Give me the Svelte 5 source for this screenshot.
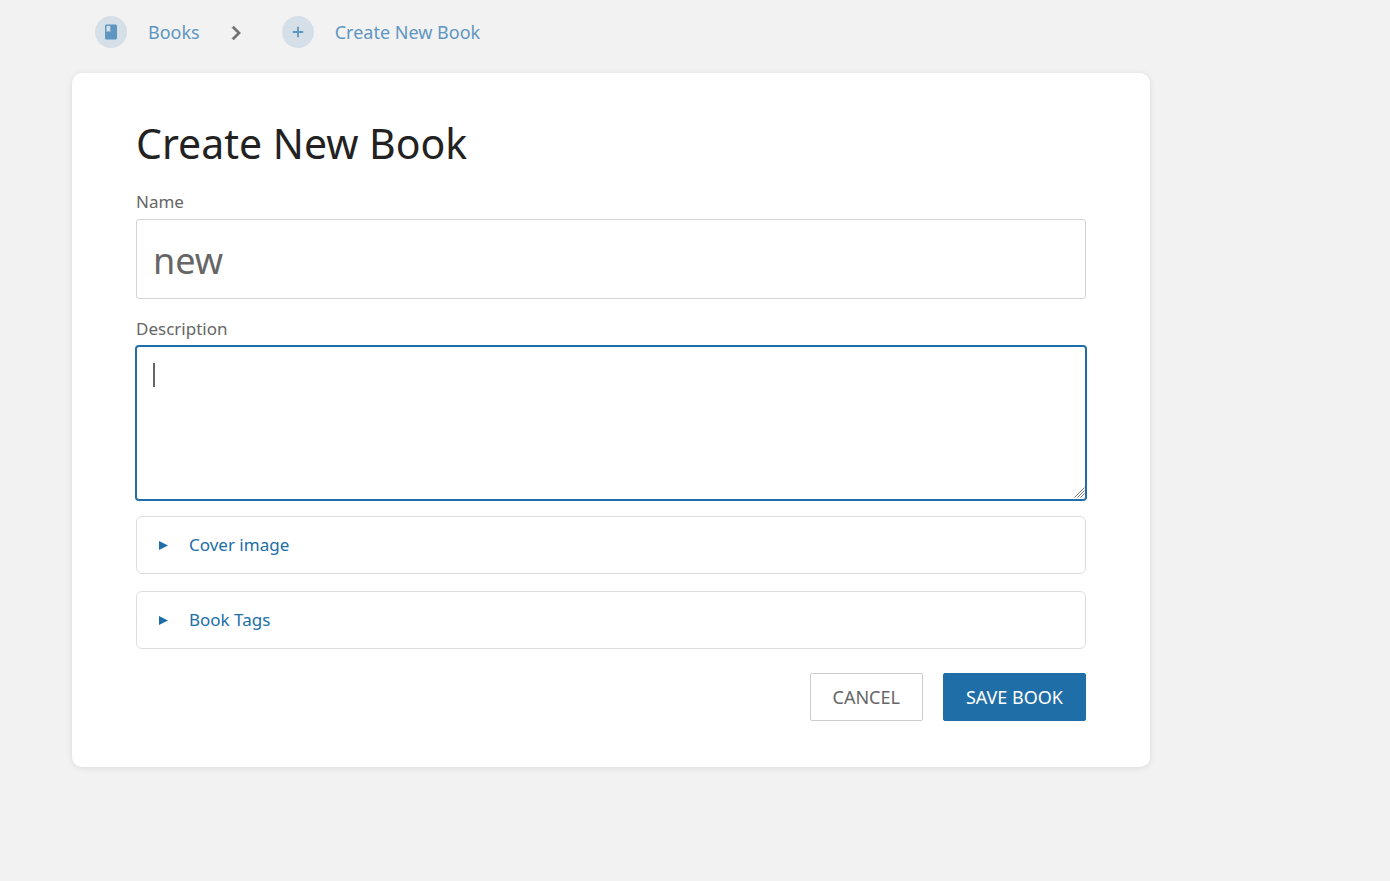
<script>
  let name = $state('new');
  let description = $state('');
  const sections = ['Cover image', 'Book Tags'];
</script>

<svelte:head><title>Create New Book</title></svelte:head>

<div class="page">
  <nav class="crumbs" aria-label="Breadcrumbs">
    <a class="crumb" href="#books">
      <span class="disc">
        <svg width="18" height="18" viewBox="0 0 24 24" aria-hidden="true">
          <path fill="currentColor" d="M18 2H6c-1.100 0-2 .9-2 2v16c0 1.100.9 2 2 2h12c1.100 0 2-.9 2-2V4c0-1.100-.9-2-2-2zM6 4h5v8l-2.500-1.500L6 12V4z" />
        </svg>
      </span>
      <span>Books</span>
    </a>
    <svg class="chevron" width="28" height="28" viewBox="0 0 24 24" aria-hidden="true">
      <path fill="currentColor" d="M10 6L8.590 7.410 13.170 12l-4.580 4.590L10 18l6-6z" stroke="currentColor" stroke-width="0.4" />
    </svg>
    <a class="crumb" href="#create">
      <span class="disc">
        <svg width="18" height="18" viewBox="0 0 24 24" aria-hidden="true">
          <path fill="currentColor" d="M19 13.200h-5.800V19h-2.400v-5.800H5v-2.400h5.800V5h2.400v5.800H19z" />
        </svg>
      </span>
      <span>Create New Book</span>
    </a>
  </nav>

  <main class="card">
    <h1>Create New Book</h1>
    <form onsubmit={(event) => event.preventDefault()}>
      <label for="name">Name</label>
      <input id="name" type="text" bind:value={name} />

      <label for="description">Description</label>
      <div class="area">
        <textarea id="description" bind:value={description}></textarea>
        {#if !description}<span class="caret"></span>{/if}
        <svg class="grip" width="11" height="11" viewBox="0 0 11 11" aria-hidden="true">
          <path d="M0.500 10.500L10.500 0.500M3.500 10.500L10.500 3.500M6.500 10.500L10.500 6.500" stroke="#777" stroke-width="1" />
        </svg>
      </div>

      {#each sections as section}
        <button class="section" type="button" aria-expanded="false">
          <svg width="9" height="9" viewBox="0 0 9 9" aria-hidden="true"><path fill="currentColor" d="M0 0L9 4.500L0 9z" /></svg>
          <span>{section}</span>
        </button>
      {/each}

      <div class="actions">
        <a class="button outline" href="#books">CANCEL</a>
        <button class="button" type="submit">SAVE BOOK</button>
      </div>
    </form>
  </main>
</div>

<style>
  :global(body) {
    margin: 0;
    background: #f2f2f2;
  }
  .page, .page * {
    box-sizing: border-box;
  }
  .page {
    padding: 0 240px 48px 72px;
    font-family: "Noto Sans", "Open Sans", sans-serif;
    font-size: 17px;
    line-height: 24px;
    color: #666;
  }
  .crumbs {
    display: flex;
    align-items: center;
    gap: 22px;
    padding: 16px 23px 25px;
    font-size: 18px;
  }
  .crumb {
    display: flex;
    align-items: center;
    gap: 21px;
    color: #5f96c1;
    text-decoration: none;
  }
  .disc {
    display: grid;
    place-items: center;
    width: 32px;
    height: 32px;
    border-radius: 50%;
    background: #d5dfe7;
  }
  .chevron {
    margin: 2px 10px 0 0;
    color: #707070;
  }
  .card {
    padding: 40px 64px 46px;
    background: #fff;
    border-radius: 10px;
    box-shadow: 0 1px 6px rgba(0, 0, 0, 0.1);
  }
  h1 {
    margin: 0 0 17px;
    font-size: 41px;
    line-height: 60px;
    font-weight: 400;
    color: #222;
  }
  form {
    display: flex;
    flex-direction: column;
  }
  label {
    margin-bottom: 5px;
  }
  input, textarea {
    width: 100%;
    display: block;
    font-family: inherit;
    color: #666;
    background: #fff;
    border: 1px solid #d4d4d4;
    border-radius: 3px;
    outline: none;
  }
  input {
    height: 80px;
    margin-bottom: 18px;
    padding: 2px 16px 0;
    font-size: 36px;
  }
  .area {
    position: relative;
    margin-bottom: 16px;
  }
  textarea {
    height: 154px;
    padding: 16px;
    font-size: 17px;
    border-color: #206ea7;
    box-shadow: 0 0 0 1px #206ea7;
    resize: vertical;
  }
  textarea::-webkit-resizer {
    background: transparent;
  }
  .caret {
    position: absolute;
    left: 17px;
    top: 17px;
    width: 2px;
    height: 24px;
    background: #666;
    pointer-events: none;
  }
  .area:focus-within .caret {
    display: none;
  }
  .grip {
    position: absolute;
    right: 1px;
    bottom: 2px;
    pointer-events: none;
  }
  .section {
    display: flex;
    align-items: center;
    gap: 21px;
    margin-bottom: 17px;
    padding: 16px 22px;
    font: inherit;
    color: #206ea7;
    background: #fff;
    border: 1px solid #ddd;
    border-radius: 6px;
    cursor: pointer;
  }
  .actions {
    display: flex;
    justify-content: flex-end;
    gap: 20px;
    margin-top: 7px;
  }
  .button {
    padding: 11px 22px;
    font: inherit;
    font-size: 18px;
    color: #fff;
    text-decoration: none;
    background: #206ea7;
    border: 1px solid #206ea7;
    border-radius: 2px;
    cursor: pointer;
  }
  .outline {
    color: #666;
    background: #fff;
    border-color: #ccc;
  }
</style>
